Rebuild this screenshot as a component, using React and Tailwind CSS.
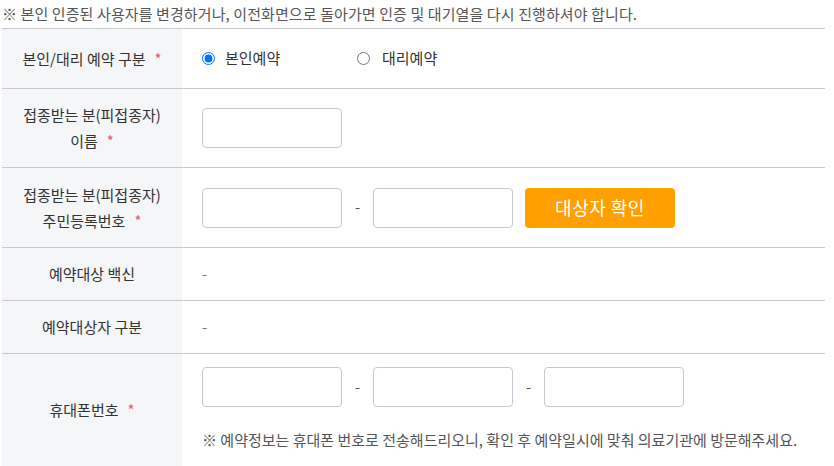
const font = { fontFamily: '"Noto Sans CJK KR", "Noto Sans", sans-serif' };

function Req() {
  return <span className="ml-[9px] text-[#e8546b]">*</span>;
}

function Row({ label, className = '', children }) {
  return (
    <div className={`flex border-b border-[#c8c8cc] ${className}`}>
      <div className="flex w-[180px] shrink-0 items-center justify-center bg-[#f5f6f8] text-center text-[15px] leading-[26px] text-[#333]">
        {label}
      </div>
      <div className="flex flex-1 items-center pl-[20px] text-[15px] text-[#333]">{children}</div>
    </div>
  );
}

function Field() {
  return (
    <input
      type="text"
      className="h-[40px] w-[140px] rounded-[4px] border border-[#c8c8cc] bg-white px-2 outline-none"
    />
  );
}

function Dash() {
  return <span className="mx-[13px] w-[5px] text-center text-[#555]">-</span>;
}

export default function App() {
  return (
    <div className="min-h-[466px] bg-white pl-[2px] pr-[9px]" style={font}>
      <div className="flex h-[28px] items-center whitespace-nowrap text-[15px] tracking-[0.1px] text-[#555]">
        ※ 본인 인증된 사용자를 변경하거나, 이전화면으로 돌아가면 인증 및 대기열을 다시 진행하셔야 합니다.
      </div>

      <div className="border-t border-[#c8c8cc]">
        <Row
          className="h-[60px]"
          label={
            <span>
              본인/대리 예약 구분<Req />
            </span>
          }
        >
          <label className="flex w-[155px] items-center">
            <input type="radio" name="type" defaultChecked className="m-0 h-[13px] w-[13px]" />
            <span className="ml-[10px]">본인예약</span>
          </label>
          <label className="flex items-center">
            <input type="radio" name="type" className="m-0 h-[13px] w-[13px]" />
            <span className="ml-[12px]">대리예약</span>
          </label>
        </Row>

        <Row
          className="h-[79px]"
          label={
            <span>
              접종받는 분(피접종자)
              <br />
              이름<Req />
            </span>
          }
        >
          <Field />
        </Row>

        <Row
          className="h-[80px]"
          label={
            <span>
              접종받는 분(피접종자)
              <br />
              주민등록번호<Req />
            </span>
          }
        >
          <Field />
          <Dash />
          <Field />
          <button
            type="button"
            className="ml-[12px] h-[40px] w-[150px] rounded-[4px] bg-[#ff9f00] text-[18px] tracking-[0.5px] text-white"
          >
            대상자 확인
          </button>
        </Row>

        <Row className="h-[53px]" label="예약대상 백신">
          <span className="text-[#777]">-</span>
        </Row>

        <Row className="h-[53px]" label="예약대상자 구분">
          <span className="text-[#777]">-</span>
        </Row>

        <div className="flex h-[113px]">
          <div className="flex w-[180px] shrink-0 items-center justify-center bg-[#f5f6f8] text-[15px] text-[#333]">
            <span>
              휴대폰번호<Req />
            </span>
          </div>
          <div className="flex flex-1 flex-col pl-[20px] pt-[13px] text-[15px]">
            <div className="flex items-center">
              <Field />
              <Dash />
              <Field />
              <Dash />
              <Field />
            </div>
            <p className="mt-[22px] whitespace-nowrap text-[#555]">
              ※ 예약정보는 휴대폰 번호로 전송해드리오니, 확인 후 예약일시에 맞춰 의료기관에 방문해주세요.
            </p>
          </div>
        </div>
      </div>
    </div>
  );
}
